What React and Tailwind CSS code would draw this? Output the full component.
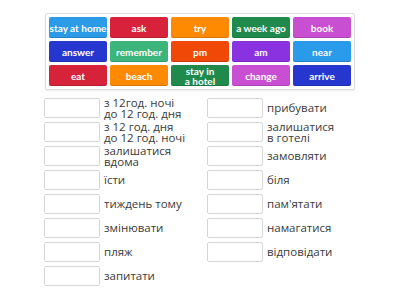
import React from "react";

const tiles = [
  { t: "stay at home", c: "bg-[#2b9be8]" },
  { t: "ask", c: "bg-[#d8223b]" },
  { t: "try", c: "bg-[#fe8a02]" },
  { t: "a week ago", c: "bg-[#1f8a4c]" },
  { t: "book", c: "bg-[#c94fd2]" },
  { t: "answer", c: "bg-[#2637cf]" },
  { t: "remember", c: "bg-[#3bb57b]" },
  { t: "pm", c: "bg-[#f04807]" },
  { t: "am", c: "bg-[#8a31e0]" },
  { t: "near", c: "bg-[#2a9aea]" },
  { t: "eat", c: "bg-[#d6233a]" },
  { t: "beach", c: "bg-[#fe8a02]" },
  { t: "stay in\na hotel", c: "bg-[#1f8a4c]" },
  { t: "change", c: "bg-[#c94fd2]" },
  { t: "arrive", c: "bg-[#2637cf]" },
];

const left = [
  "з 12год. ночі\nдо 12 год. дня",
  "з 12 год. дня\nдо 12 год. ночі",
  "залишатися\nвдома",
  "їсти",
  "тиждень тому",
  "змінювати",
  "пляж",
  "запитати",
];

const right = [
  "прибувати",
  "залишатися\nв готелі",
  "замовляти",
  "біля",
  "пам'ятати",
  "намагатися",
  "відповідати",
];

function Row({ text }) {
  return (
    <div className="flex h-[24px] items-center">
      <div className="w-[56px] h-[20px] shrink-0 border border-[#d6d6d6] rounded-[2px] bg-white" />
      <div className="ml-[4px] whitespace-pre text-[11.5px] leading-[11.5px] text-[#3a3a3a]">
        {text}
      </div>
    </div>
  );
}

export default function App() {
  return (
    <div className="w-[400px] h-[300px] bg-white pt-[13px] overflow-hidden" style={{ fontFamily: '"Open Sans", sans-serif' }}>
      <div className="mx-auto w-[310px] border border-[#dcdcdc] rounded-[2px] p-[3px] grid grid-cols-5 gap-[3px] shadow-[0_1px_2px_rgba(0,0,0,0.08)]">
        {tiles.map((x, i) => (
          <div
            key={i}
            className={`${x.c} h-[21px] rounded-[2px] flex items-center justify-center text-white font-bold text-[10px] leading-[10px] text-center whitespace-pre shadow-[inset_0_-1px_0_rgba(0,0,0,0.15)]`}
            style={{ fontFamily: 'Lato, sans-serif' }}
          >
            {x.t}
          </div>
        ))}
      </div>
      <div className="mt-[6px] pl-[44px] flex">
        <div className="w-[163px] flex flex-col">
          {left.map((t, i) => (
            <Row key={i} text={t} />
          ))}
        </div>
        <div className="w-[163px] flex flex-col">
          {right.map((t, i) => (
            <Row key={i} text={t} />
          ))}
        </div>
      </div>
    </div>
  );
}
